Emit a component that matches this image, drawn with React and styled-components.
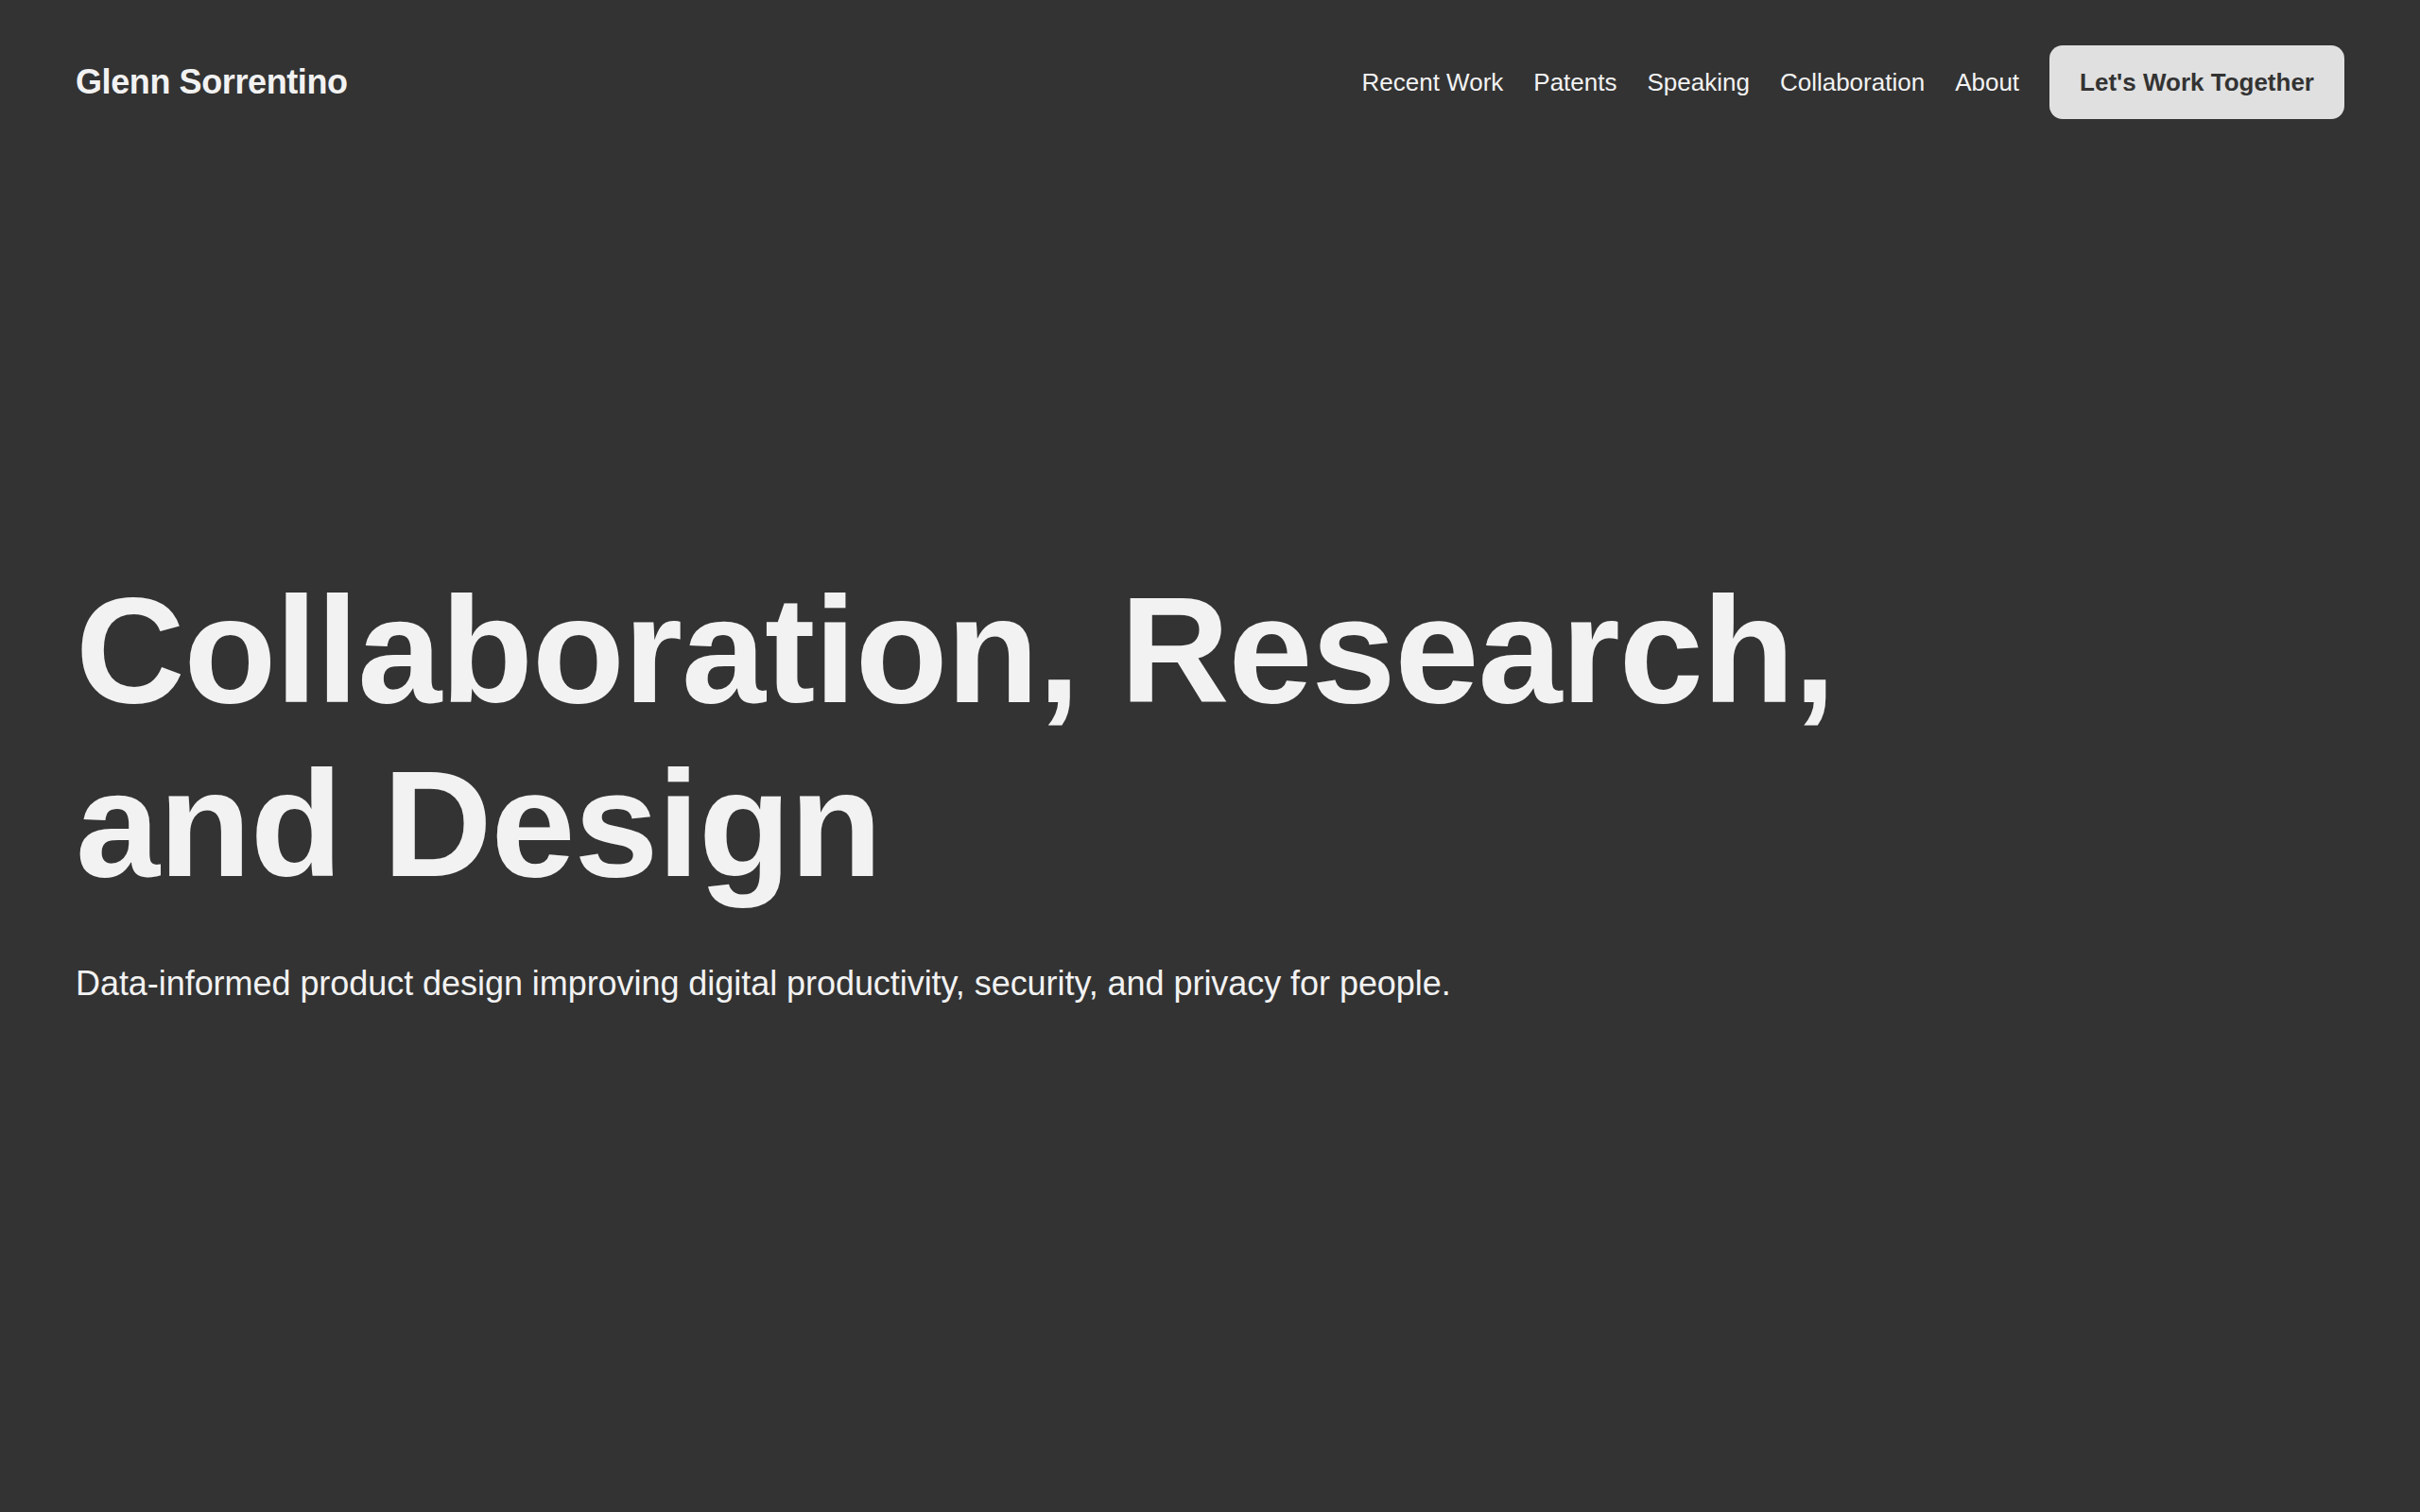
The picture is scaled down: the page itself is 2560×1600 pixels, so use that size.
import styled, { createGlobalStyle } from "styled-components";

const GlobalStyle = createGlobalStyle`
  html, body {
    margin: 0;
    padding: 0;
    background: #333333;
  }
  body {
    font-family: "Liberation Sans", Arial, sans-serif;
    color: #f2f2f2;
  }
`;

const Page = styled.div`
  min-height: 1600px;
  background: #333333;
  display: flex;
  flex-direction: column;
`;

const Header = styled.header`
  display: flex;
  align-items: center;
  justify-content: space-between;
  padding: 48px 80px;
`;

const Logo = styled.a`
  font-size: 36px;
  font-weight: 700;
  letter-spacing: -0.4px;
  color: #f2f2f2;
  text-decoration: none;
`;

const Nav = styled.nav`
  display: flex;
  align-items: center;
  gap: 32px;
`;

const NavLink = styled.a`
  font-size: 26px;
  color: #f2f2f2;
  text-decoration: none;
`;

const CtaButton = styled.a`
  display: inline-flex;
  align-items: center;
  height: 78px;
  box-sizing: border-box;
  padding: 0 32px;
  border-radius: 14px;
  background: #e0e0e0;
  color: #333333;
  font-size: 26px;
  font-weight: 700;
  text-decoration: none;
`;

const Hero = styled.main`
  padding: 422px 80px 0;
`;

const Title = styled.h1`
  margin: 0;
  font-size: 160px;
  line-height: 1.15;
  font-weight: 700;
  letter-spacing: -1px;
  color: #f2f2f2;
`;

const Lead = styled.p`
  margin: 50px 0 0;
  font-size: 36px;
  line-height: 1.5;
  letter-spacing: -0.05px;
  color: #f2f2f2;
`;

const links = ["Recent Work", "Patents", "Speaking", "Collaboration", "About"];

export default function App() {
  return (
    <Page>
      <GlobalStyle />
      <Header>
        <Logo href="#">Glenn Sorrentino</Logo>
        <Nav>
          {links.map((l) => (
            <NavLink key={l} href="#">{l}</NavLink>
          ))}
          <CtaButton href="#">Let's Work Together</CtaButton>
        </Nav>
      </Header>
      <Hero>
        <Title>
          Collaboration, Research,
          <br />
          and Design
        </Title>
        <Lead>
          Data-informed product design improving digital productivity, security, and privacy for people.
        </Lead>
      </Hero>
    </Page>
  );
}
